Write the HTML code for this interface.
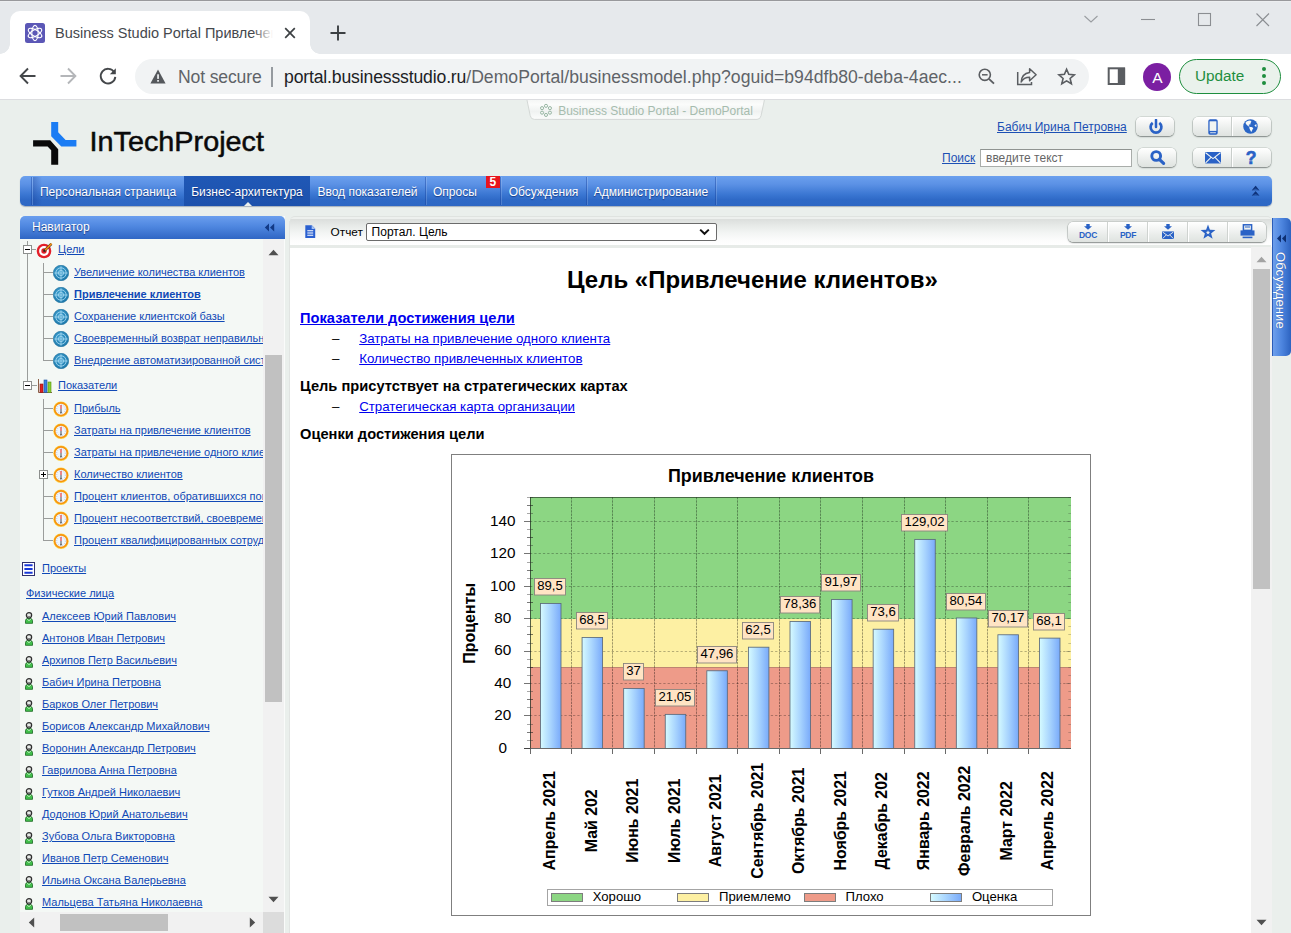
<!DOCTYPE html>
<html lang="ru">
<head>
<meta charset="utf-8">
<title>Business Studio Portal Привлечение клиентов</title>
<style>
*{box-sizing:border-box;margin:0;padding:0}
html,body{width:1291px;height:933px;overflow:hidden}
body{position:relative;background:#eaefec;font-family:"Liberation Sans",Arial,sans-serif;font-size:12px;color:#000}
.abs{position:absolute}
a{color:#1c50b4;text-decoration:underline}
/* ---------- browser chrome ---------- */
#chrome{position:absolute;left:0;top:0;width:1291px;height:100px;background:#e6e9ec}
#chrome .topline{position:absolute;left:0;top:0;width:1291px;height:1px;background:#98999c;box-shadow:0 1px 0 #eceef0}
#tab{position:absolute;left:10px;top:11px;width:300px;height:44px;background:#fff;border-radius:10px 10px 0 0}
#tab:before,#tab:after{content:"";position:absolute;top:32.5px;width:10px;height:10px}
#tab:before{left:-10px;background:radial-gradient(circle at 0 0,transparent 9.5px,#fff 10px)}
#tab:after{right:-10px;background:radial-gradient(circle at 100% 0,transparent 9.5px,#fff 10px)}
#tabtitle{position:absolute;left:55px;top:23px;width:218px;height:20px;font-size:14.5px;line-height:20px;color:#45484d;white-space:nowrap;overflow:hidden;letter-spacing:0}
#tabfade{position:absolute;left:253px;top:22px;width:20px;height:22px;background:linear-gradient(90deg,rgba(255,255,255,0),#fff)}
#toolbar{position:absolute;left:0;top:53.5px;width:1291px;height:45.5px;background:#fff}
#chrome .botline{position:absolute;left:0;top:99px;width:1291px;height:1px;background:#dcdde0}
#omni{position:absolute;left:135px;top:59px;width:954px;height:35px;border-radius:17.5px;background:#f1f3f4}
.omtxt{position:absolute;top:66px;height:22px;line-height:22px;font-size:17.6px;white-space:nowrap;letter-spacing:-0.15px}
</style>
</head>
<body>
<div id="chrome">
  <div class="topline"></div>
  <div id="tab"></div>
  <!-- favicon -->
  <svg class="abs" style="left:25px;top:23px" width="20" height="20" viewBox="0 0 20 20">
    <rect x="0" y="0" width="20" height="20" rx="2.5" fill="#5b57b6"/>
    <g fill="none" stroke="#fff" stroke-width="1.1">
      <ellipse cx="10" cy="10" rx="3.2" ry="7.6"/>
      <ellipse cx="10" cy="10" rx="3.2" ry="7.6" transform="rotate(60 10 10)"/>
      <ellipse cx="10" cy="10" rx="3.2" ry="7.6" transform="rotate(-60 10 10)"/>
    </g>
  </svg>
  <div id="tabtitle">Business Studio Portal Привлечение клиентов</div>
  <div id="tabfade"></div>
  <!-- tab close -->
  <svg class="abs" style="left:283px;top:26px" width="14" height="14" viewBox="0 0 14 14"><path d="M2.2 2.2 L11.8 11.8 M11.8 2.2 L2.2 11.8" stroke="#3c4043" stroke-width="1.7" fill="none"/></svg>
  <!-- new tab plus -->
  <svg class="abs" style="left:329px;top:24px" width="18" height="18" viewBox="0 0 18 18"><path d="M9 1.5 V16.5 M1.5 9 H16.5" stroke="#3c4043" stroke-width="1.9" fill="none"/></svg>
  <!-- window controls -->
  <svg class="abs" style="left:1083px;top:13px" width="16" height="12" viewBox="0 0 16 12"><path d="M1.5 3 L8 9 L14.5 3" stroke="#9a9da1" stroke-width="1.1" fill="none"/></svg>
  <svg class="abs" style="left:1140px;top:18px" width="16" height="3" viewBox="0 0 16 3"><path d="M1 1.5 H15" stroke="#8b8e92" stroke-width="1.1" fill="none"/></svg>
  <svg class="abs" style="left:1197px;top:12px" width="16" height="16" viewBox="0 0 16 16"><rect x="1.5" y="1.5" width="12" height="12" stroke="#8b8e92" stroke-width="1.1" fill="none"/></svg>
  <svg class="abs" style="left:1255px;top:12px" width="16" height="16" viewBox="0 0 16 16"><path d="M1.5 1.5 L14 14 M14 1.5 L1.5 14" stroke="#8b8e92" stroke-width="1.1" fill="none"/></svg>

  <div id="toolbar"></div>
  <div class="botline"></div>
  <!-- back -->
  <svg class="abs" style="left:18px;top:66px" width="20" height="20" viewBox="0 0 20 20"><path d="M17.5 10 H3 M10 2.5 L2.6 10 L10 17.5" stroke="#44474a" stroke-width="1.9" fill="none"/></svg>
  <!-- forward -->
  <svg class="abs" style="left:58px;top:66px" width="20" height="20" viewBox="0 0 20 20"><path d="M2.5 10 H17 M10 2.5 L17.4 10 L10 17.5" stroke="#b4b6b9" stroke-width="1.9" fill="none"/></svg>
  <!-- reload -->
  <svg class="abs" style="left:98px;top:66px" width="20" height="20" viewBox="0 0 20 20"><path d="M16.2 6.2 A7.3 7.3 0 1 0 17.3 10.8" stroke="#44474a" stroke-width="1.9" fill="none"/><path d="M17.8 2.2 V8.2 H11.8 Z" fill="#44474a"/></svg>
  <div id="omni"></div>
  <!-- warning icon -->
  <svg class="abs" style="left:150px;top:69px" width="16" height="15" viewBox="0 0 16 15"><path d="M8 0.6 L15.6 14.4 H0.4 Z" fill="#55585c"/><rect x="7.2" y="5.3" width="1.7" height="4.6" fill="#f1f3f4"/><rect x="7.2" y="11" width="1.7" height="1.7" fill="#f1f3f4"/></svg>
  <div class="omtxt" id="ns" style="left:178px;color:#5f6368">Not secure</div>
  <div class="abs" style="left:271px;top:67px;width:1.6px;height:20px;background:#959a9f"></div>
  <div class="omtxt" id="url" style="left:284px;color:#5f6368"><span id="dom" style="color:#202124">portal.businessstudio.ru</span><span id="pth" style="letter-spacing:0.02px">/DemoPortal/businessmodel.php?oguid=b94dfb80-deba-4aec...</span></div>
  <!-- zoom-out magnifier -->
  <svg class="abs" style="left:976px;top:66px" width="22" height="22" viewBox="0 0 22 22"><circle cx="8.8" cy="8.8" r="5.6" stroke="#5a5d61" stroke-width="1.6" fill="none"/><path d="M12.9 12.9 L18 17.6" stroke="#5a5d61" stroke-width="1.9"/><path d="M6 8.8 H11.6" stroke="#5a5d61" stroke-width="1.5"/></svg>
  <!-- share -->
  <svg class="abs" style="left:1015px;top:65px" width="24" height="24" viewBox="0 0 24 24"><path d="M2.7 7.1 V19.6 H16.5 V17" stroke="#5a5d61" stroke-width="1.5" fill="none"/><path d="M14.6 3.8 L21.1 9.8 L14.6 15.7 V12.2 C10.5 12.2 8 13.5 6.2 17 C6.5 11.5 9.5 8 14.6 7.4 Z" stroke="#5a5d61" stroke-width="1.5" fill="none" stroke-linejoin="round"/></svg>
  <!-- star -->
  <svg class="abs" style="left:1056.6px;top:67.1px" width="19.2" height="19.2" viewBox="0 0 24 24"><path d="M12 2.8 L14.7 9.2 L21.6 9.8 L16.4 14.3 L18 21 L12 17.4 L6 21 L7.6 14.3 L2.4 9.8 L9.3 9.2 Z" stroke="#5a5d61" stroke-width="2" fill="none" stroke-linejoin="miter"/></svg>
  <!-- side panel -->
  <svg class="abs" style="left:1106px;top:66px" width="22" height="22" viewBox="0 0 22 22"><rect x="2.7" y="2.3" width="15.4" height="15.7" stroke="#5a5d61" stroke-width="2" fill="none"/><rect x="11.8" y="2.3" width="7.3" height="15.7" fill="#5a5d61"/></svg>
  <!-- avatar -->
  <div class="abs" style="left:1143.3px;top:62.7px;width:28px;height:28px;border-radius:50%;background:#7b1fa2;color:#fff;font-size:15.5px;line-height:29px;text-align:center">A</div>
  <!-- update -->
  <div class="abs" style="left:1179px;top:59px;width:102px;height:35px;border:1.5px solid #1e8e3e;border-radius:18px;background:#eaf2ec"></div>
  <div class="abs" id="upd" style="left:1195px;top:65px;font-size:15.3px;line-height:22px;color:#1e8e3e">Update</div>
  <div class="abs" style="left:1262px;top:67px;width:4px;height:4px;border-radius:50%;background:#1e8e3e;box-shadow:0 7px 0 #1e8e3e,0 14px 0 #1e8e3e"></div>
</div>
<style>
.btn{position:absolute;border-radius:5px;background:linear-gradient(#ffffff 0%,#f7f8f7 25%,#e9ecea 65%,#dfe3e0 100%);box-shadow:0 1px 1.5px rgba(60,70,65,.55),0 0 0 0.6px rgba(120,130,125,.38)}
.hlink{position:absolute;font-size:12px;line-height:14px;white-space:nowrap;color:#1c50b4;text-decoration:underline}
#menubar{position:absolute;left:20px;top:176px;width:1252px;height:30px;border-radius:5px;background:linear-gradient(#6ba0ee 0%,#5b91e5 28%,#3a76d2 62%,#2e69c6 80%,#2d67c4 100%);box-shadow:0 1px 1px rgba(40,60,100,.35)}
.mi{position:absolute;top:177px;height:30px;line-height:31px;font-size:12px;color:#fff;white-space:nowrap;text-shadow:0 1px 1px rgba(0,20,80,.55);text-align:center}
.msep{position:absolute;top:177px;width:2px;height:28px;background:linear-gradient(90deg,rgba(20,60,150,.4) 50%,rgba(255,255,255,.16) 50%)}
</style>
<!-- small portal tab -->
<svg class="abs" style="left:524px;top:100px" width="246" height="24" viewBox="0 0 246 24">
  <defs><linearGradient id="ptg" x1="0" y1="0" x2="0" y2="1"><stop offset="0" stop-color="#f4f6f5"/><stop offset="0.25" stop-color="#fbfcfb"/><stop offset="0.6" stop-color="#f0f2f1"/><stop offset="1" stop-color="#fcfdfc"/></linearGradient></defs>
  <path d="M2.9 -0.5 L6.2 15.6 Q6.9 19.4 10.4 19.4 H233 Q236.3 19.4 237.1 15.6 L240.5 -0.5 Z" fill="url(#ptg)" stroke="#d0d5d2" stroke-width="0.9"/>
  <g fill="none" stroke="#8fb09b" stroke-width="0.9"><circle cx="22.00" cy="5.85" r="1.55"/><circle cx="25.94" cy="8.12" r="1.55"/><circle cx="25.94" cy="12.67" r="1.55"/><circle cx="22.00" cy="14.95" r="1.55"/><circle cx="18.06" cy="12.68" r="1.55"/><circle cx="18.06" cy="8.12" r="1.55"/></g>
  <text x="34.2" y="14.7" font-family="Liberation Sans, Arial, sans-serif" font-size="12" fill="#a6bcae">Business Studio Portal - DemoPortal</text>
</svg>
<!-- logo -->
<svg class="abs" style="left:30px;top:118px" width="240" height="50" viewBox="0 0 240 50">
  <path d="M21.2 4.1 H28.2 V14.3 L35.6 21.9 H46.4 V28.6 H31.3 L21.2 18.2 Z" fill="#1b7cf4"/>
  <path d="M3.1 22.2 H20.2 L28.2 31.3 V46.8 H21.2 V32.3 L17.6 28.6 H3.1 Z" fill="#0a0a0a"/>
  <text id="logotxt" x="59.5" y="33.4" font-family="Liberation Sans, Arial, sans-serif" font-size="28" fill="#0a0a0a" stroke="#0a0a0a" stroke-width="0.5" textLength="174.5" lengthAdjust="spacingAndGlyphs">InTechProject</text>
</svg>
<!-- header right -->
<a class="hlink" id="uname" style="left:997px;top:120px">Бабич Ирина Петровна</a>
<div class="btn" style="left:1136px;top:117px;width:38px;height:19px"></div>
<svg class="abs" style="left:1147.5px;top:118.5px" width="16" height="16" viewBox="0 0 16 16"><path d="M4.7 3.9 A5.4 5.4 0 1 0 11.3 3.9" stroke="#2a62c6" stroke-width="2.7" fill="none"/><path d="M8 0.9 V7.9" stroke="#2a62c6" stroke-width="2.5" stroke-linecap="round"/></svg>
<div class="btn" style="left:1193px;top:117px;width:78px;height:19px"></div>
<div class="abs" style="left:1231px;top:117px;width:1px;height:19px;background:#c9cecb;box-shadow:1px 0 0 #fff"></div>
<svg class="abs" style="left:1207.5px;top:118.5px" width="10" height="16" viewBox="0 0 10 16"><rect x="0.3" y="0.3" width="9.4" height="15.4" rx="1.8" fill="#2a62c6"/><rect x="1.6" y="2.3" width="6.8" height="9.6" fill="#f1f4f2"/><rect x="2.4" y="13" width="1.3" height="1.3" fill="#f1f4f2"/><rect x="4.35" y="13" width="1.3" height="1.3" fill="#f1f4f2"/><rect x="6.3" y="13" width="1.3" height="1.3" fill="#f1f4f2"/></svg>
<svg class="abs" style="left:1243.4px;top:118.95px" width="15" height="15" viewBox="0 0 15 15"><circle cx="7.5" cy="7.5" r="7.25" fill="#2a66c6"/><path d="M2.6 3.6 Q3.2 2.2 5.4 1.8 L7.1 1.6 L8.4 2.4 L7.6 4 L7.3 5.6 L6 5.4 L5.6 6.2 L6.6 7 L6.2 7.7 Q4.6 7.2 3.4 5.6 Q2.4 4.6 2.6 3.6 Z M6.5 7.9 L8.4 8 Q9.8 8.4 10.3 9.2 L9.4 10.8 L8.6 12.6 L8.2 12.9 L7.4 11.6 L6.8 10.2 L6.2 8.8 Z M11.4 6.5 L13.3 5 Q13.6 6.6 13.4 7.9 L12.4 7.6 Z" fill="#f6f8f7"/></svg>

<a class="hlink" id="poisk" style="left:942px;top:151px">Поиск</a>
<div class="abs" style="left:980px;top:149px;width:152px;height:18px;background:#fff;border:1px solid #a9adaa;border-top-color:#8f9491"></div>
<div class="abs" id="ph" style="left:986px;top:151px;font-size:12px;line-height:14px;color:#666;white-space:nowrap">введите текст</div>
<div class="btn" style="left:1138px;top:148px;width:38px;height:19px"></div>
<svg class="abs" style="left:1149px;top:149px" width="17" height="17" viewBox="0 0 17 17"><circle cx="7.2" cy="7" r="4.4" stroke="#2a62c6" stroke-width="2.9" fill="none"/><path d="M10.6 10.6 L14.6 14.4" stroke="#2a62c6" stroke-width="3.2" stroke-linecap="round"/></svg>
<div class="btn" style="left:1193px;top:148px;width:78px;height:19px"></div>
<div class="abs" style="left:1231px;top:148px;width:1px;height:19px;background:#c9cecb;box-shadow:1px 0 0 #fff"></div>
<svg class="abs" style="left:1205px;top:151.5px" width="16" height="12" viewBox="0 0 16 12"><rect x="0" y="0" width="16" height="11.4" rx="1" fill="#2a62c6"/><path d="M0.6 0.8 L8 6.6 L15.4 0.8 M0.6 10.8 L6 5.4 M15.4 10.8 L10 5.4" stroke="#f1f4f2" stroke-width="1.1" fill="none"/></svg>
<div class="abs" style="left:1243px;top:147.5px;width:16px;height:20px;font-size:17.5px;font-weight:bold;line-height:20px;text-align:center;color:#2a62c6;-webkit-text-stroke:0.6px #2a62c6">?</div>

<!-- menu bar -->
<div id="menubar"></div>
<div class="msep" style="left:31px"></div>
<div class="abs" style="left:33px;top:177px;width:9px;height:28px;background:linear-gradient(90deg,rgba(20,55,140,.32),rgba(20,55,140,0))"></div>
<div class="mi" style="left:32px;width:152px">Персональная страница</div>
<div class="abs" style="left:184px;top:176px;width:126px;height:30px;background:linear-gradient(#2058b6,#1c51ac)"></div>
<div class="mi" style="left:184px;width:126px">Бизнес-архитектура</div>
<svg class="abs" style="left:243.5px;top:202px" width="8" height="4" viewBox="0 0 8 4"><path d="M0 4 L4 0 L8 4 Z" fill="#eaefec"/></svg>
<div class="mi" style="left:310px;width:115px">Ввод показателей</div>
<div class="msep" style="left:425px"></div>
<div class="mi" id="opr" style="left:433px;width:44px;text-align:left">Опросы</div>
<div class="abs" style="left:485.5px;top:176px;width:14.5px;height:12.3px;background:#e8141e;color:#fff;font-size:12px;font-weight:bold;line-height:12.5px;text-align:center">5</div>
<div class="msep" style="left:500px"></div>
<div class="mi" style="left:501px;width:85px">Обсуждения</div>
<div class="msep" style="left:586px"></div>
<div class="mi" style="left:587px;width:128px">Администрирование</div>
<div class="msep" style="left:715px"></div>
<svg class="abs" style="left:1251px;top:185px" width="10" height="12" viewBox="0 0 10 12"><path d="M0.8 5.4 L4.6 0.8 L8.4 5.4 L4.6 3.6 Z M0.8 10.8 L4.6 6.2 L8.4 10.8 L4.6 9 Z" fill="#0d2c6c"/><path d="M0.8 5.4 L4.6 0.8 L8.4 5.4 Z M0.8 10.8 L4.6 6.2 L8.4 10.8 Z" fill="#123a86" opacity="0.55"/></svg>
<style>
#nav{position:absolute;left:20px;top:216px;width:265px;height:717px;background:#f4f8f5;border-right:1px solid #fafbfa}
#navhead{position:absolute;left:20px;top:216px;width:265px;height:23px;border-radius:5px 5px 0 0;background:linear-gradient(#6a9eee 0%,#4f87e0 45%,#2f66c4 100%)}
#navhead span{position:absolute;left:12px;top:4px;font-size:12px;line-height:14px;color:#fff;text-shadow:0 1px 1px rgba(0,20,80,.6)}
#tree{position:absolute;left:20px;top:239px;width:243px;height:673px;overflow:hidden}
.tl{position:absolute;font-size:11px;line-height:14px;white-space:nowrap;color:#1049b6;text-decoration:underline}
.tv{position:absolute;width:1px;background:#9a9d9b}
.th{position:absolute;height:1px;background:#9a9d9b}
.exp{position:absolute;width:9px;height:9px;border:1px solid #8c8f8d;background:#fff}
.exp:before{content:"";position:absolute;left:1px;top:3px;width:5px;height:1px;background:#000}
.exp.plus:after{content:"";position:absolute;left:3px;top:1px;width:1px;height:5px;background:#000}
</style>
<div id="nav"></div>
<div id="navhead"><span>Навигатор</span></div>
<svg class="abs" style="left:264px;top:223px" width="11" height="9" viewBox="0 0 11 9"><path d="M5 0.6 L0.8 4.5 L5 8.4 Z M10.2 0.6 L6 4.5 L10.2 8.4 Z" fill="#123a86"/></svg>
<svg width="0" height="0" style="position:absolute">
 <defs>
  <radialGradient id="gblue" cx="0.4" cy="0.35" r="0.7"><stop offset="0" stop-color="#3f9fcf"/><stop offset="1" stop-color="#1c78aa"/></radialGradient>
  <g id="ic-goal">
    <circle cx="8" cy="8" r="7.7" fill="url(#gblue)" stroke="#1c6f9c" stroke-width="0.6"/>
    <circle cx="8" cy="8" r="5.2" fill="none" stroke="#9fd6ef" stroke-width="0.9"/>
    <circle cx="8" cy="8" r="2.6" fill="none" stroke="#9fd6ef" stroke-width="0.9"/>
    <path d="M8 1.4 V14.6 M1.4 8 H14.6" stroke="#9fd6ef" stroke-width="0.9"/>
  </g>
  <g id="ic-ind">
    <circle cx="8" cy="8.2" r="7.7" fill="#ffd23f"/>
    <circle cx="8" cy="8.2" r="6.3" fill="#eef5fd" stroke="#f7940f" stroke-width="1.7"/>
    <circle cx="8" cy="8.2" r="4.3" fill="none" stroke="#7f98b4" stroke-width="0.7" stroke-dasharray="0.6 1.65"/>
    <path d="M8 7.8 V12" stroke="#3c3c3c" stroke-width="0.9"/>
    <path d="M8 4 V7.9" stroke="#e81818" stroke-width="1"/>
    <path d="M6.9 12.3 L8 10.4 L9.1 12.3 Z" fill="#5a5a5a"/>
  </g>
  <g id="ic-user">
    <path d="M0.5 12.3 V9.4 Q0.5 7.4 2.6 7.1 H6 Q8.1 7.4 8.1 9.4 V12.3 Z" fill="#43c04c" stroke="#1c6a24" stroke-width="0.9"/>
    <path d="M2.3 7.6 L4.3 9.6 L6.3 7.6" stroke="#c8f0c8" stroke-width="1" fill="none"/>
    <circle cx="4.3" cy="3.6" r="2.9" fill="#e9ece9" stroke="#2e2e2e" stroke-width="1.3"/>
    <path d="M2.3 4.2 Q4.3 6.4 6.3 4.2" stroke="#555" stroke-width="0.8" fill="none"/>
  </g>
 </defs>
</svg>
<div id="tree">
<div class="tv" style="left:7px;top:2px;height:4px"></div>
<div class="tv" style="left:7px;top:15px;height:127px"></div>
<div class="th" style="left:12px;top:10px;width:4px"></div>
<div class="th" style="left:12px;top:146px;width:5px"></div>
<div class="tv" style="left:23px;top:24px;height:97px"></div>
<div class="tv" style="left:23px;top:160px;height:141px"></div>
<div class="exp" style="left:3px;top:6px"></div>
<svg class="abs" style="left:16px;top:3.2px" width="18" height="17" viewBox="0 0 18 17">
 <circle cx="8" cy="9" r="7.3" fill="#e3202a"/><circle cx="8" cy="9" r="4.9" fill="#fff"/><circle cx="8" cy="9" r="2.7" fill="#e3202a"/>
 <path d="M8 9.2 L15.4 1.8" stroke="#3a2a1a" stroke-width="2.6"/><path d="M9 8.2 L15.6 1.6" stroke="#f59212" stroke-width="1.6"/><path d="M7.2 10 L9.4 9 L8.2 7.8 Z" fill="#222"/>
</svg>
<a class="tl" id="t1" style="left:38px;top:3.3px">Цели</a>
<div class="th" style="left:23px;top:33px;width:10px"></div>
<svg class="abs" style="left:33.0px;top:26.0px" width="16" height="16"><use href="#ic-goal"/></svg>
<a class="tl" id="t2" style="left:54px;top:26.0px">Увеличение количества клиентов</a>
<div class="th" style="left:23px;top:55px;width:10px"></div>
<svg class="abs" style="left:33.0px;top:48.0px" width="16" height="16"><use href="#ic-goal"/></svg>
<a class="tl" id="t3" style="left:54px;top:48.0px;font-weight:bold">Привлечение клиентов</a>
<div class="th" style="left:23px;top:77px;width:10px"></div>
<svg class="abs" style="left:33.0px;top:70.0px" width="16" height="16"><use href="#ic-goal"/></svg>
<a class="tl" id="t4" style="left:54px;top:70.0px">Сохранение клиентской базы</a>
<div class="th" style="left:23px;top:99px;width:10px"></div>
<svg class="abs" style="left:33.0px;top:92.0px" width="16" height="16"><use href="#ic-goal"/></svg>
<a class="tl" id="t5" style="left:54px;top:92.0px">Своевременный возврат неправильно оформленных документов</a>
<div class="th" style="left:23px;top:121px;width:10px"></div>
<svg class="abs" style="left:33.0px;top:114.0px" width="16" height="16"><use href="#ic-goal"/></svg>
<a class="tl" id="t6" style="left:54px;top:114.0px">Внедрение автоматизированной системы управления</a>
<div class="exp" style="left:3px;top:142px"></div>
<svg class="abs" style="left:18px;top:140px" width="14" height="14" viewBox="0 0 14 14">
 <path d="M0.5 0 V13.5 H14" stroke="#8a6048" stroke-width="1" fill="none"/>
 <rect x="2" y="5" width="3" height="8.5" fill="#e02020" stroke="#901010" stroke-width="0.6"/>
 <rect x="6" y="1" width="3" height="12.5" fill="#3a7fe0" stroke="#1a4fa0" stroke-width="0.6"/>
 <rect x="10" y="3" width="3" height="10.5" fill="#8ccf30" stroke="#4f8f10" stroke-width="0.6"/>
</svg>
<a class="tl" id="t7" style="left:38px;top:139.0px">Показатели</a>
<div class="th" style="left:23px;top:169px;width:10px"></div>
<svg class="abs" style="left:33.2px;top:162.3px" width="16" height="16"><use href="#ic-ind"/></svg>
<a class="tl" id="t8" style="left:54px;top:162.0px">Прибыль</a>
<div class="th" style="left:23px;top:191px;width:10px"></div>
<svg class="abs" style="left:33.2px;top:184.3px" width="16" height="16"><use href="#ic-ind"/></svg>
<a class="tl" id="t9" style="left:54px;top:184.0px">Затраты на привлечение клиентов</a>
<div class="th" style="left:23px;top:213px;width:10px"></div>
<svg class="abs" style="left:33.2px;top:206.3px" width="16" height="16"><use href="#ic-ind"/></svg>
<a class="tl" id="t10" style="left:54px;top:206.0px">Затраты на привлечение одного клиента</a>
<div class="th" style="left:23px;top:235px;width:10px"></div>
<div class="exp plus" style="left:19px;top:231px"></div>
<svg class="abs" style="left:33.2px;top:228.3px" width="16" height="16"><use href="#ic-ind"/></svg>
<a class="tl" id="t11" style="left:54px;top:228.0px">Количество клиентов</a>
<div class="th" style="left:23px;top:257px;width:10px"></div>
<svg class="abs" style="left:33.2px;top:250.3px" width="16" height="16"><use href="#ic-ind"/></svg>
<a class="tl" id="t12" style="left:54px;top:250.0px">Процент клиентов, обратившихся повторно</a>
<div class="th" style="left:23px;top:279px;width:10px"></div>
<svg class="abs" style="left:33.2px;top:272.3px" width="16" height="16"><use href="#ic-ind"/></svg>
<a class="tl" id="t13" style="left:54px;top:272.0px">Процент несоответствий, своевременно устраненных</a>
<div class="th" style="left:23px;top:301px;width:10px"></div>
<svg class="abs" style="left:33.2px;top:294.3px" width="16" height="16"><use href="#ic-ind"/></svg>
<a class="tl" id="t14" style="left:54px;top:294.0px">Процент квалифицированных сотрудников</a>
<svg class="abs" style="left:2px;top:323px" width="13" height="14" viewBox="0 0 13 14">
 <rect x="0.5" y="0.5" width="12" height="13" fill="#fff" stroke="#30306e" stroke-width="1"/>
 <path d="M2.4 3.3 H10.6 M2.4 7 H10.6 M2.4 10.7 H10.6" stroke="#1838d8" stroke-width="2"/>
</svg>
<a class="tl" id="t15" style="left:22px;top:322.0px">Проекты</a>
<a class="tl" id="t16" style="left:6px;top:347.0px">Физические лица</a>
<svg class="abs" style="left:5.4px;top:373.0px" width="8" height="11.8" viewBox="0 0 8.6 12.8"><use href="#ic-user"/></svg>
<a class="tl" id="t17" style="left:22px;top:370.0px">Алексеев Юрий Павлович</a>
<svg class="abs" style="left:5.4px;top:395.0px" width="8" height="11.8" viewBox="0 0 8.6 12.8"><use href="#ic-user"/></svg>
<a class="tl" id="t18" style="left:22px;top:392.0px">Антонов Иван Петрович</a>
<svg class="abs" style="left:5.4px;top:417.0px" width="8" height="11.8" viewBox="0 0 8.6 12.8"><use href="#ic-user"/></svg>
<a class="tl" id="t19" style="left:22px;top:414.0px">Архипов Петр Васильевич</a>
<svg class="abs" style="left:5.4px;top:439.0px" width="8" height="11.8" viewBox="0 0 8.6 12.8"><use href="#ic-user"/></svg>
<a class="tl" id="t20" style="left:22px;top:436.0px">Бабич Ирина Петровна</a>
<svg class="abs" style="left:5.4px;top:461.0px" width="8" height="11.8" viewBox="0 0 8.6 12.8"><use href="#ic-user"/></svg>
<a class="tl" id="t21" style="left:22px;top:458.0px">Барков Олег Петрович</a>
<svg class="abs" style="left:5.4px;top:483.0px" width="8" height="11.8" viewBox="0 0 8.6 12.8"><use href="#ic-user"/></svg>
<a class="tl" id="t22" style="left:22px;top:480.0px">Борисов Александр Михайлович</a>
<svg class="abs" style="left:5.4px;top:505.0px" width="8" height="11.8" viewBox="0 0 8.6 12.8"><use href="#ic-user"/></svg>
<a class="tl" id="t23" style="left:22px;top:502.0px">Воронин Александр Петрович</a>
<svg class="abs" style="left:5.4px;top:527.0px" width="8" height="11.8" viewBox="0 0 8.6 12.8"><use href="#ic-user"/></svg>
<a class="tl" id="t24" style="left:22px;top:524.0px">Гаврилова Анна Петровна</a>
<svg class="abs" style="left:5.4px;top:549.0px" width="8" height="11.8" viewBox="0 0 8.6 12.8"><use href="#ic-user"/></svg>
<a class="tl" id="t25" style="left:22px;top:546.0px">Гутков Андрей Николаевич</a>
<svg class="abs" style="left:5.4px;top:571.0px" width="8" height="11.8" viewBox="0 0 8.6 12.8"><use href="#ic-user"/></svg>
<a class="tl" id="t26" style="left:22px;top:568.0px">Додонов Юрий Анатольевич</a>
<svg class="abs" style="left:5.4px;top:593.0px" width="8" height="11.8" viewBox="0 0 8.6 12.8"><use href="#ic-user"/></svg>
<a class="tl" id="t27" style="left:22px;top:590.0px">Зубова Ольга Викторовна</a>
<svg class="abs" style="left:5.4px;top:615.0px" width="8" height="11.8" viewBox="0 0 8.6 12.8"><use href="#ic-user"/></svg>
<a class="tl" id="t28" style="left:22px;top:612.0px">Иванов Петр Семенович</a>
<svg class="abs" style="left:5.4px;top:637.0px" width="8" height="11.8" viewBox="0 0 8.6 12.8"><use href="#ic-user"/></svg>
<a class="tl" id="t29" style="left:22px;top:634.0px">Ильина Оксана Валерьевна</a>
<svg class="abs" style="left:5.4px;top:659.0px" width="8" height="11.8" viewBox="0 0 8.6 12.8"><use href="#ic-user"/></svg>
<a class="tl" id="t30" style="left:22px;top:656.0px">Мальцева Татьяна Николаевна</a>
</div>
<div class="abs" style="left:263px;top:239px;width:21px;height:673px;background:#f1f1f1"></div>
<div class="abs" style="left:265px;top:355px;width:17px;height:347px;background:#c1c1c1"></div>
<svg class="abs" style="left:268px;top:249px" width="11" height="7" viewBox="0 0 11 7"><path d="M0.5 6.2 L5.5 0.8 L10.5 6.2 Z" fill="#505050"/></svg>
<svg class="abs" style="left:268px;top:896px" width="11" height="7" viewBox="0 0 11 7"><path d="M0.5 0.8 L5.5 6.2 L10.5 0.8 Z" fill="#505050"/></svg>
<div class="abs" style="left:20px;top:912px;width:243px;height:21px;background:#f1f1f1"></div>
<div class="abs" style="left:263px;top:912px;width:21px;height:21px;background:#dcdcdc"></div>
<div class="abs" style="left:60px;top:914px;width:108px;height:17px;background:#c1c1c1"></div>
<svg class="abs" style="left:28px;top:917px" width="7" height="11" viewBox="0 0 7 11"><path d="M6.2 0.5 L0.8 5.5 L6.2 10.5 Z" fill="#505050"/></svg>
<svg class="abs" style="left:249px;top:917px" width="7" height="11" viewBox="0 0 7 11"><path d="M0.8 0.5 L6.2 5.5 L0.8 10.5 Z" fill="#505050"/></svg>

<style>
#mainbar{position:absolute;left:290px;top:216px;width:982px;height:31.5px;background:linear-gradient(#edf0ee 0px,#edf0ee 1.5px,#dcdfdd 2.5px,#e6e9e7 8px,#f3f5f4 16px,#fdfdfd 24px,#ffffff 28px);border-top:1px solid #dfe3e0;border-radius:5px 5px 0 0}
#content{position:absolute;left:290px;top:247.6px;width:961px;height:686px;background:#fff}
.tb{position:absolute;top:222px;height:20px}
.c{position:absolute;white-space:nowrap;font-family:"Liberation Sans",Arial,sans-serif}
.c a,a.c{color:#0000ee}
</style>
<div id="mainbar"></div>
<div id="content"></div>
<div class="abs" style="left:289px;top:221px;width:1px;height:712px;background:#e1e4e2"></div>
<div class="abs" style="left:290px;top:245px;width:981px;height:2.6px;background:#e7ebe8"></div>
<!-- doc icon -->
<svg class="abs" style="left:305px;top:224.5px" width="10.5" height="13.5" viewBox="0 0 11 14"><path d="M0.3 0.3 H7.2 L10.7 3.8 V13.7 H0.3 Z" fill="#2a60d0"/><path d="M7 0.3 V4 H10.7 Z" fill="#a9c4f3"/><path d="M2.4 6 H8.6 M2.4 8.3 H8.6 M2.4 10.6 H8.6" stroke="#fff" stroke-width="1.1"/></svg>
<div class="abs" id="otchet" style="left:330.6px;top:225px;font-size:11.8px;line-height:14px">Отчет</div>
<div class="abs" style="left:366px;top:222.7px;width:351px;height:18px;background:#fff;border:1px solid #6b6b6b;border-radius:2px"></div>
<div class="abs" id="selv" style="left:371.6px;top:225px;font-size:12px;line-height:14px;white-space:nowrap">Портал. Цель</div>
<svg class="abs" style="left:698.9px;top:228.2px" width="11" height="8" viewBox="0 0 11 8"><path d="M1.2 1.6 L5.5 5.8 L9.8 1.6" stroke="#111" stroke-width="2" fill="none"/></svg>
<!-- right toolbar buttons -->
<div class="btn" style="left:1068px;top:222px;width:198px;height:20px"></div>
<div class="abs" style="left:1107px;top:222px;width:1px;height:20px;background:#cfd3d0;box-shadow:1px 0 0 #fff"></div>
<div class="abs" style="left:1147px;top:222px;width:1px;height:20px;background:#cfd3d0;box-shadow:1px 0 0 #fff"></div>
<div class="abs" style="left:1187px;top:222px;width:1px;height:20px;background:#cfd3d0;box-shadow:1px 0 0 #fff"></div>
<div class="abs" style="left:1227px;top:222px;width:1px;height:20px;background:#cfd3d0;box-shadow:1px 0 0 #fff"></div>
<svg class="abs" style="left:1082px;top:224px" width="12" height="6" viewBox="0 0 12 6"><path d="M4.3 0 H7.7 V2.2 H10 L6 5.8 L2 2.2 H4.3 Z" fill="#2a62c6"/></svg>
<div class="abs" style="left:1068px;top:230px;width:40px;font-size:8.5px;line-height:10px;font-weight:bold;text-align:center;color:#2a62c6;letter-spacing:-0.3px">DOC</div>
<svg class="abs" style="left:1122px;top:224px" width="12" height="6" viewBox="0 0 12 6"><path d="M4.3 0 H7.7 V2.2 H10 L6 5.8 L2 2.2 H4.3 Z" fill="#2a62c6"/></svg>
<div class="abs" style="left:1108px;top:230px;width:40px;font-size:8.5px;line-height:10px;font-weight:bold;text-align:center;color:#2a62c6;letter-spacing:-0.3px">PDF</div>
<svg class="abs" style="left:1161px;top:224px" width="14" height="16" viewBox="0 0 14 16"><path d="M5.3 0 H8.7 V2.2 H11 L7 5.8 L3 2.2 H5.3 Z" fill="#2a62c6"/><rect x="1" y="7.4" width="12" height="7.6" fill="#2a62c6"/><path d="M1.6 8 L7 12 L12.4 8 M1.6 14.6 L5.4 10.8 M12.4 14.6 L8.6 10.8" stroke="#eef1ef" stroke-width="0.9" fill="none"/></svg>
<svg class="abs" style="left:1200px;top:224px" width="16" height="16" viewBox="0 0 16 16"><path d="M8 0.6 L9.9 5.8 L15.4 6 L11.1 9.4 L12.6 14.8 L8 11.7 L3.4 14.8 L4.9 9.4 L0.6 6 L6.1 5.8 Z" fill="#2a62c6"/><path d="M8 6.3 L8.6 7.8 L10.2 7.9 L8.9 8.9 L9.4 10.4 L8 9.5 L6.6 10.4 L7.1 8.9 L5.8 7.9 L7.4 7.8 Z" fill="#eef1ef"/></svg>
<svg class="abs" style="left:1240px;top:224px" width="15" height="15" viewBox="0 0 15 15"><rect x="3.4" y="0.8" width="8.2" height="5.6" fill="#eef1ef" stroke="#2a62c6" stroke-width="1.5"/><path d="M5 3 H10" stroke="#2a62c6" stroke-width="1"/><rect x="0.5" y="6.4" width="14" height="5.2" fill="#2a62c6"/><rect x="2.6" y="12.6" width="9.8" height="1.6" fill="#2a62c6"/></svg>

<!-- content text -->
<div class="c" id="h1" style="left:567px;top:266px;font-size:24px;line-height:28px;font-weight:bold">Цель «Привлечение клиентов»</div>
<a class="c" id="s1" style="left:300px;top:310px;font-size:14.67px;line-height:17px;font-weight:bold">Показатели достижения цели</a>
<div class="c" style="left:332px;top:331px;font-size:13.33px;line-height:15px">–</div>
<a class="c" id="l1" style="left:359.2px;top:331px;font-size:13.27px;line-height:15px">Затраты на привлечение одного клиента</a>
<div class="c" style="left:332px;top:351px;font-size:13.33px;line-height:15px">–</div>
<a class="c" id="l2" style="left:359.2px;top:351px;font-size:13.27px;line-height:15px">Количество привлеченных клиентов</a>
<div class="c" id="s2" style="left:300px;top:378px;font-size:14.67px;line-height:17px;font-weight:bold">Цель присутствует на стратегических картах</div>
<div class="c" style="left:332px;top:399px;font-size:13.33px;line-height:15px">–</div>
<a class="c" id="l3" style="left:359.2px;top:399px;font-size:13.27px;line-height:15px">Стратегическая карта организации</a>
<div class="c" id="s3" style="left:300px;top:426px;font-size:14.67px;line-height:17px;font-weight:bold">Оценки достижения цели</div>

<!-- main scrollbar -->
<div class="abs" style="left:1251px;top:247px;width:21px;height:686px;background:#f1f1f1"></div>
<div class="abs" style="left:1253px;top:269px;width:17px;height:320px;background:#c1c1c1"></div>
<svg class="abs" style="left:1256px;top:256px" width="11" height="7" viewBox="0 0 11 7"><path d="M0.5 6.2 L5.5 0.8 L10.5 6.2 Z" fill="#a3a3a3"/></svg>
<svg class="abs" style="left:1256px;top:919px" width="11" height="7" viewBox="0 0 11 7"><path d="M0.5 0.8 L5.5 6.2 L10.5 0.8 Z" fill="#505050"/></svg>

<!-- side tab -->
<div class="abs" style="left:1272px;top:218px;width:19px;height:138px;border-radius:0 5px 5px 0;background:linear-gradient(90deg,#6e9fec 0%,#4c84de 50%,#2d63c0 100%);border-left:1px solid #2a5cb8"></div>
<svg class="abs" style="left:1276px;top:234px" width="11" height="9" viewBox="0 0 11 9"><path d="M5 0.5 L1 4.5 L5 8.5 Z M10 0.5 L6 4.5 L10 8.5 Z" fill="#0e2f72"/></svg>
<div class="abs" id="sidetxt" style="left:1270.8px;top:252px;width:19px;height:80px;writing-mode:vertical-rl;font-size:13px;line-height:19px;color:#fff;white-space:nowrap;text-shadow:0 0 1px rgba(0,20,80,.6);letter-spacing:0.1px">Обсуждение</div>
<svg class="abs" style="left:445px;top:450px" width="655" height="475" viewBox="0 0 655 475" font-family="Liberation Sans, Arial, sans-serif">
<defs><linearGradient id="barg" x1="0" y1="0" x2="1" y2="0"><stop offset="0" stop-color="#d6fbff"/><stop offset="0.5" stop-color="#a8d4fe"/><stop offset="1" stop-color="#79aafa"/></linearGradient></defs>
<rect x="6.5" y="4.5" width="639.0" height="461.0" fill="#fff" stroke="#7f7f7f" stroke-width="1"/>
<text id="ctitle" x="326.0" y="32.0" font-size="17.9" font-weight="bold" text-anchor="middle" fill="#000">Привлечение клиентов</text>
<rect x="85.0" y="47.0" width="541.0" height="122.0" fill="#8cd683"/>
<rect x="85.0" y="169.0" width="541.0" height="48.0" fill="#fdf0a3"/>
<rect x="85.0" y="217.0" width="541.0" height="82.0" fill="#ee9b89"/>
<path d="M85.0 217.5 H626.0" stroke="rgba(80,80,60,.3)" stroke-width="1" fill="none"/>
<path d="M126.5 47.0 V298.5 M167.5 47.0 V298.5 M209.5 47.0 V298.5 M251.5 47.0 V298.5 M292.5 47.0 V298.5 M334.5 47.0 V298.5 M375.5 47.0 V298.5 M417.5 47.0 V298.5 M459.5 47.0 V298.5 M500.5 47.0 V298.5 M542.5 47.0 V298.5 M583.5 47.0 V298.5" stroke="rgba(0,0,0,.52)" stroke-width="0.7" stroke-dasharray="2.4 0.9" fill="none"/>
<path d="M85.0 265.5 H626.0 M85.0 233.5 H626.0 M85.0 201.5 H626.0 M85.0 168.5 H626.0 M85.0 136.5 H626.0 M85.0 103.5 H626.0 M85.0 71.5 H626.0" stroke="rgba(0,0,0,.4)" stroke-width="0.7" stroke-dasharray="2.3 2" fill="none"/>
<path d="M85.0 47.5 H626.0" stroke="rgba(40,60,40,.7)" stroke-width="1" fill="none"/>
<rect x="95.50" y="153.45" width="20.5" height="145.05" fill="url(#barg)" stroke="#5b6a7c" stroke-width="0.85"/>
<rect x="137.08" y="187.48" width="20.5" height="111.02" fill="url(#barg)" stroke="#5b6a7c" stroke-width="0.85"/>
<rect x="178.67" y="238.53" width="20.5" height="59.97" fill="url(#barg)" stroke="#5b6a7c" stroke-width="0.85"/>
<rect x="220.25" y="264.38" width="20.5" height="34.12" fill="url(#barg)" stroke="#5b6a7c" stroke-width="0.85"/>
<rect x="261.83" y="220.77" width="20.5" height="77.73" fill="url(#barg)" stroke="#5b6a7c" stroke-width="0.85"/>
<rect x="303.41" y="197.21" width="20.5" height="101.29" fill="url(#barg)" stroke="#5b6a7c" stroke-width="0.85"/>
<rect x="345.00" y="171.50" width="20.5" height="127.00" fill="url(#barg)" stroke="#5b6a7c" stroke-width="0.85"/>
<rect x="386.58" y="149.44" width="20.5" height="149.06" fill="url(#barg)" stroke="#5b6a7c" stroke-width="0.85"/>
<rect x="428.16" y="179.22" width="20.5" height="119.28" fill="url(#barg)" stroke="#5b6a7c" stroke-width="0.85"/>
<rect x="469.75" y="89.40" width="20.5" height="209.10" fill="url(#barg)" stroke="#5b6a7c" stroke-width="0.85"/>
<rect x="511.33" y="167.97" width="20.5" height="130.53" fill="url(#barg)" stroke="#5b6a7c" stroke-width="0.85"/>
<rect x="552.91" y="184.77" width="20.5" height="113.73" fill="url(#barg)" stroke="#5b6a7c" stroke-width="0.85"/>
<rect x="594.50" y="188.13" width="20.5" height="110.37" fill="url(#barg)" stroke="#5b6a7c" stroke-width="0.85"/>
<path d="M85.5 47.0 V298.5" stroke="rgba(35,50,35,.85)" stroke-width="0.9" fill="none"/>
<path d="M79.0 298.5 H626.0" stroke="#6a6a6a" stroke-width="1" fill="none"/>
<path d="M79.0 298.5 H86.0 M79.0 265.5 H86.0 M79.0 233.5 H86.0 M79.0 201.5 H86.0 M79.0 168.5 H86.0 M79.0 136.5 H86.0 M79.0 103.5 H86.0 M79.0 71.5 H86.0" stroke="rgba(50,50,50,.8)" stroke-width="0.85" fill="none"/>
<path d="M82.0 282.5 H88.0 M82.0 249.5 H88.0 M82.0 217.5 H88.0 M82.0 184.5 H88.0 M82.0 152.5 H88.0 M82.0 120.5 H88.0 M82.0 87.5 H88.0 M82.0 55.5 H88.0" stroke="rgba(30,30,30,.7)" stroke-width="0.85" fill="none"/>
<path d="M82.0 290.5 H88.0 M82.0 274.5 H88.0 M82.0 257.5 H88.0 M82.0 241.5 H88.0 M82.0 225.5 H88.0 M82.0 209.5 H88.0 M82.0 193.5 H88.0 M82.0 176.5 H88.0 M82.0 160.5 H88.0 M82.0 144.5 H88.0 M82.0 128.5 H88.0 M82.0 112.5 H88.0 M82.0 95.5 H88.0 M82.0 79.5 H88.0 M82.0 63.5 H88.0 M82.0 47.5 H88.0" stroke="rgba(50,50,50,.5)" stroke-width="0.85" fill="none"/>
<path d="M621.0 298.5 H626.0 M623.3 290.5 H626.0 M623.3 282.5 H626.0 M623.3 274.5 H626.0 M621.0 265.5 H626.0 M623.3 257.5 H626.0 M623.3 249.5 H626.0 M623.3 241.5 H626.0 M621.0 233.5 H626.0 M623.3 225.5 H626.0 M623.3 217.5 H626.0 M623.3 209.5 H626.0 M621.0 201.5 H626.0 M623.3 193.5 H626.0 M623.3 184.5 H626.0 M623.3 176.5 H626.0 M621.0 168.5 H626.0 M623.3 160.5 H626.0 M623.3 152.5 H626.0 M623.3 144.5 H626.0 M621.0 136.5 H626.0 M623.3 128.5 H626.0 M623.3 120.5 H626.0 M623.3 112.5 H626.0 M621.0 103.5 H626.0 M623.3 95.5 H626.0 M623.3 87.5 H626.0 M623.3 79.5 H626.0 M621.0 71.5 H626.0 M623.3 63.5 H626.0 M623.3 55.5 H626.0 M623.3 47.5 H626.0" stroke="rgba(50,60,50,.32)" stroke-width="0.85" fill="none"/>
<text x="57.7" y="302.6" font-size="15.3" text-anchor="middle" fill="#000">0</text>
<text x="57.7" y="270.2" font-size="15.3" text-anchor="middle" fill="#000">20</text>
<text x="57.7" y="237.8" font-size="15.3" text-anchor="middle" fill="#000">40</text>
<text x="57.7" y="205.4" font-size="15.3" text-anchor="middle" fill="#000">60</text>
<text x="57.7" y="172.9" font-size="15.3" text-anchor="middle" fill="#000">80</text>
<text x="57.7" y="140.5" font-size="15.3" text-anchor="middle" fill="#000">100</text>
<text x="57.7" y="108.1" font-size="15.3" text-anchor="middle" fill="#000">120</text>
<text x="57.7" y="75.7" font-size="15.3" text-anchor="middle" fill="#000">140</text>
<path d="M85.5 298.5 V304.0 M126.5 298.5 V304.0 M167.5 298.5 V304.0 M209.5 298.5 V304.0 M251.5 298.5 V304.0 M292.5 298.5 V304.0 M334.5 298.5 V304.0 M375.5 298.5 V304.0 M417.5 298.5 V304.0 M459.5 298.5 V304.0 M500.5 298.5 V304.0 M542.5 298.5 V304.0 M583.5 298.5 V304.0" stroke="#6a6a6a" stroke-width="1" fill="none"/>
<text id="ytitle" transform="translate(29.8 173.4) rotate(-90)" font-size="16" font-weight="bold" text-anchor="middle" fill="#000">Проценты</text>
<text class="xl" transform="translate(110.00 370.8) rotate(-90)" font-size="15.9" font-weight="bold" text-anchor="middle" fill="#000">Апрель 2021</text>
<text class="xl" transform="translate(151.53 370.8) rotate(-90)" font-size="15.9" font-weight="bold" text-anchor="middle" fill="#000">Май 202</text>
<text class="xl" transform="translate(193.06 370.8) rotate(-90)" font-size="15.9" font-weight="bold" text-anchor="middle" fill="#000">Июнь 2021</text>
<text class="xl" transform="translate(234.59 370.8) rotate(-90)" font-size="15.9" font-weight="bold" text-anchor="middle" fill="#000">Июль 2021</text>
<text class="xl" transform="translate(276.12 370.8) rotate(-90)" font-size="15.9" font-weight="bold" text-anchor="middle" fill="#000">Август 2021</text>
<text class="xl" transform="translate(317.65 370.8) rotate(-90)" font-size="15.9" font-weight="bold" text-anchor="middle" fill="#000">Сентябрь 2021</text>
<text class="xl" transform="translate(359.18 370.8) rotate(-90)" font-size="15.9" font-weight="bold" text-anchor="middle" fill="#000">Октябрь 2021</text>
<text class="xl" transform="translate(400.71 370.8) rotate(-90)" font-size="15.9" font-weight="bold" text-anchor="middle" fill="#000">Ноябрь 2021</text>
<text class="xl" transform="translate(442.24 370.8) rotate(-90)" font-size="15.9" font-weight="bold" text-anchor="middle" fill="#000">Декабрь 202</text>
<text class="xl" transform="translate(483.77 370.8) rotate(-90)" font-size="15.9" font-weight="bold" text-anchor="middle" fill="#000">Январь 2022</text>
<text class="xl" transform="translate(525.30 370.8) rotate(-90)" font-size="15.9" font-weight="bold" text-anchor="middle" fill="#000">Февраль 2022</text>
<text class="xl" transform="translate(566.83 370.8) rotate(-90)" font-size="15.9" font-weight="bold" text-anchor="middle" fill="#000">Март 2022</text>
<text class="xl" transform="translate(608.36 370.8) rotate(-90)" font-size="15.9" font-weight="bold" text-anchor="middle" fill="#000">Апрель 2022</text>
<rect x="89.5" y="128.5" width="31" height="16.5" fill="#ffe4c4" stroke="#8a857e" stroke-width="0.9"/>
<text x="105.0" y="140.1" font-size="13.15" text-anchor="middle" fill="#000">89,5</text>
<rect x="131.5" y="162.5" width="31" height="16.5" fill="#ffe4c4" stroke="#8a857e" stroke-width="0.9"/>
<text x="147.0" y="174.1" font-size="13.15" text-anchor="middle" fill="#000">68,5</text>
<rect x="178.5" y="213.5" width="20" height="16.5" fill="#ffe4c4" stroke="#8a857e" stroke-width="0.9"/>
<text x="188.5" y="225.1" font-size="13.15" text-anchor="middle" fill="#000">37</text>
<rect x="210.5" y="239.5" width="39" height="16.5" fill="#ffe4c4" stroke="#8a857e" stroke-width="0.9"/>
<text x="230.0" y="251.1" font-size="13.15" text-anchor="middle" fill="#000">21,05</text>
<rect x="252.5" y="196.5" width="39" height="16.5" fill="#ffe4c4" stroke="#8a857e" stroke-width="0.9"/>
<text x="272.0" y="208.1" font-size="13.15" text-anchor="middle" fill="#000">47,96</text>
<rect x="297.5" y="172.5" width="31" height="16.5" fill="#ffe4c4" stroke="#8a857e" stroke-width="0.9"/>
<text x="313.0" y="184.1" font-size="13.15" text-anchor="middle" fill="#000">62,5</text>
<rect x="335.5" y="146.5" width="39" height="16.5" fill="#ffe4c4" stroke="#8a857e" stroke-width="0.9"/>
<text x="355.0" y="158.1" font-size="13.15" text-anchor="middle" fill="#000">78,36</text>
<rect x="376.5" y="124.5" width="39" height="16.5" fill="#ffe4c4" stroke="#8a857e" stroke-width="0.9"/>
<text x="396.0" y="136.1" font-size="13.15" text-anchor="middle" fill="#000">91,97</text>
<rect x="422.5" y="154.5" width="31" height="16.5" fill="#ffe4c4" stroke="#8a857e" stroke-width="0.9"/>
<text x="438.0" y="166.1" font-size="13.15" text-anchor="middle" fill="#000">73,6</text>
<rect x="456.5" y="64.5" width="46" height="16.5" fill="#ffe4c4" stroke="#8a857e" stroke-width="0.9"/>
<text x="479.5" y="76.1" font-size="13.15" text-anchor="middle" fill="#000">129,02</text>
<rect x="501.5" y="143.5" width="39" height="16.5" fill="#ffe4c4" stroke="#8a857e" stroke-width="0.9"/>
<text x="521.0" y="155.1" font-size="13.15" text-anchor="middle" fill="#000">80,54</text>
<rect x="543.5" y="160.5" width="39" height="16.5" fill="#ffe4c4" stroke="#8a857e" stroke-width="0.9"/>
<text x="563.0" y="172.1" font-size="13.15" text-anchor="middle" fill="#000">70,17</text>
<rect x="588.5" y="163.5" width="31" height="16.5" fill="#ffe4c4" stroke="#8a857e" stroke-width="0.9"/>
<text x="604.0" y="175.1" font-size="13.15" text-anchor="middle" fill="#000">68,1</text>
<rect x="102.5" y="439.5" width="505.0" height="16.0" fill="#fff" stroke="#a4a4a4" stroke-width="1"/>
<rect x="106.5" y="443.5" width="31" height="8" fill="#8cd683" stroke="#7d7d7d" stroke-width="1"/>
<text x="147.7" y="450.7" font-size="13.15" fill="#000">Хорошо</text>
<rect x="232.5" y="443.5" width="31" height="8" fill="#fdf0a3" stroke="#7d7d7d" stroke-width="1"/>
<text x="274.1" y="450.7" font-size="13.15" fill="#000">Приемлемо</text>
<rect x="359.5" y="443.5" width="31" height="8" fill="#ee9b89" stroke="#7d7d7d" stroke-width="1"/>
<text x="400.5" y="450.7" font-size="13.15" fill="#000">Плохо</text>
<rect x="485.5" y="443.5" width="31" height="8" fill="url(#barg)" stroke="#7d7d7d" stroke-width="1"/>
<text x="526.9" y="450.7" font-size="13.15" fill="#000">Оценка</text>
</svg>
</body>
</html>
